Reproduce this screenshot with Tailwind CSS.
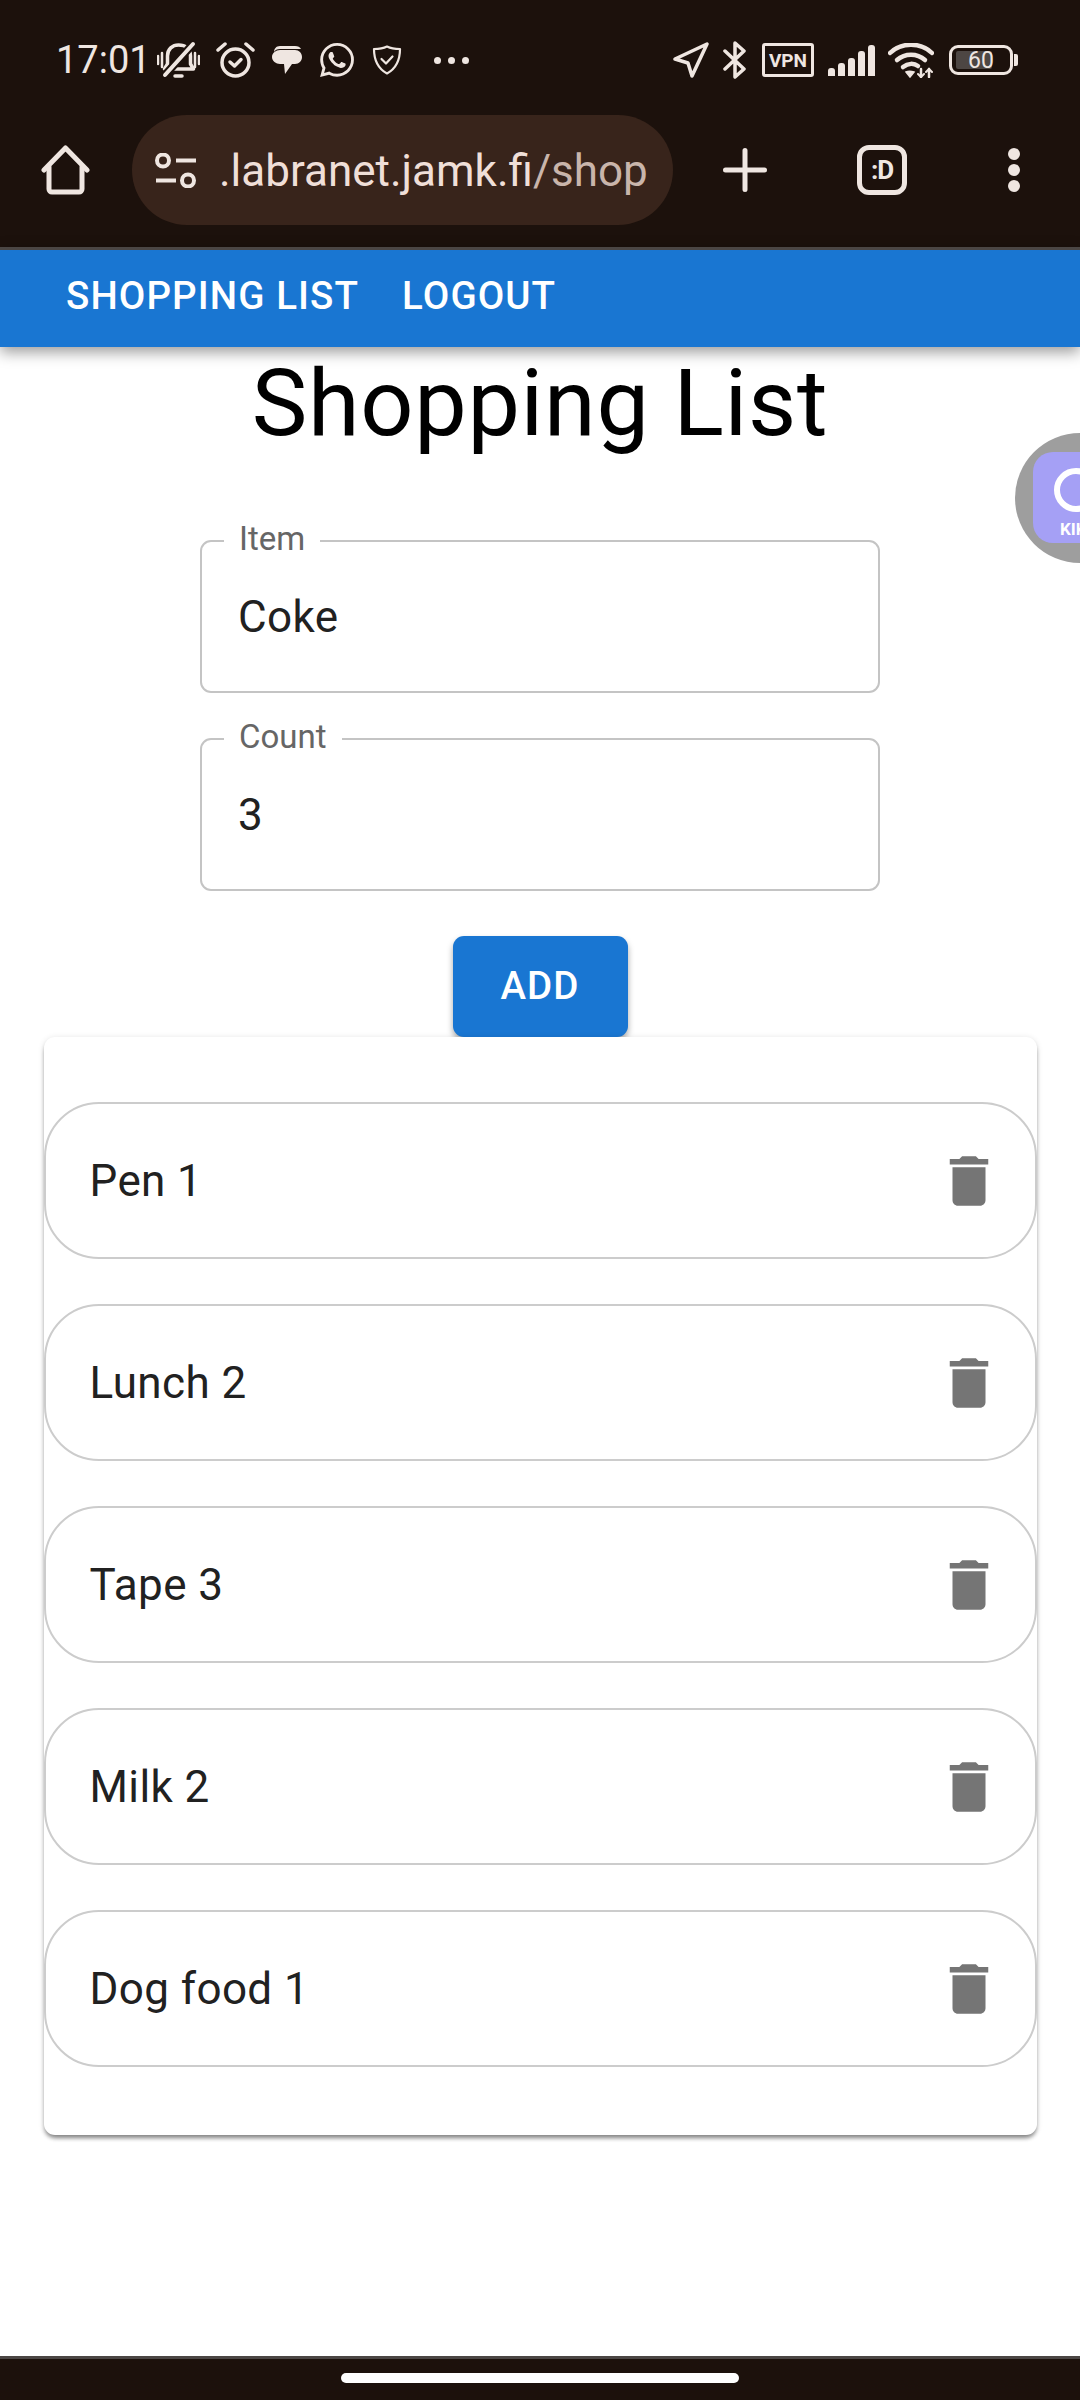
<!DOCTYPE html>
<html lang="en">

<head>
  <meta charset="UTF-8">
  <title>Shopping List</title>
  <script src="https://cdn.jsdelivr.net/npm/@tailwindcss/browser@4"></script>
</head>

<body class="bg-white">
  <div class="relative flex flex-col w-[1080px] h-[2400px] overflow-hidden bg-white font-['Roboto',sans-serif]">

    <!-- Browser chrome -->
    <div class="h-[247px] shrink-0 bg-[#1c110c] text-[#efe6e1]">
      <!-- Status bar -->
      <div class="flex items-center h-[40px] mt-[40px] pl-[56px]">
        <span class="w-[88px] text-[38px] leading-none">17:01</span>
        <svg class="ml-[13px] w-[43px] h-[38px]" viewBox="0 0 43 38" fill="none" stroke="currentColor" stroke-width="3.500" stroke-linecap="round" stroke-linejoin="round">
          <path d="M21.500 4c-6 0-11 4-11 11v8l-3 5h29l-3-5v-8c0-7-5-11-12-11z" />
          <path d="M18 35h7" />
          <path d="M8 34 36 3" stroke="#1c110c" stroke-width="8" />
          <path d="M8 34 36 3" stroke-width="4" />
          <path d="M1 15v8M5 12v14M38 12v14M42 15v8" stroke-width="2.500" />
        </svg>
        <svg class="ml-[16px] w-[39px] h-[36px]" viewBox="0 0 39 36" fill="none" stroke="currentColor" stroke-width="3.500" stroke-linecap="round" stroke-linejoin="round">
          <circle cx="19.500" cy="20.500" r="13.500" />
          <path d="M14 20l4.500 4 6.500-6.500" />
          <path d="M2 8l7-6M37 8l-7-6" />
        </svg>
        <svg class="ml-[17px] w-[30px] h-[28px]" viewBox="0 0 30 28" fill="currentColor">
          <path d="M8 0h15c3 0 5 1 6 3H8C5 3 3 4 2 6 2 3 4 0 8 0z" />
          <path d="M8 4h15c4 0 7 3 7 7s-3 7-7 7h-3l-7 10-1-10H8c-4 0-8-3-8-7s4-7 8-7z" />
        </svg>
        <svg class="ml-[18px] w-[34px] h-[34px]" viewBox="0 0 24 24" fill="currentColor">
          <path d="M17.472 14.382c-.297-.149-1.758-.867-2.03-.967-.273-.099-.471-.148-.67.15-.197.297-.767.966-.94 1.164-.173.199-.347.223-.644.075-.297-.15-1.255-.463-2.39-1.475-.883-.788-1.48-1.761-1.653-2.059-.173-.297-.018-.458.13-.606.134-.133.298-.347.446-.52.149-.174.198-.298.298-.497.099-.198.05-.371-.025-.52-.075-.149-.669-1.612-.916-2.207-.242-.579-.487-.5-.669-.51-.173-.008-.371-.01-.57-.01-.198 0-.52.074-.792.372-.272.297-1.04 1.016-1.04 2.479 0 1.462 1.065 2.875 1.213 3.074.149.198 2.096 3.2 5.077 4.487.709.306 1.262.489 1.694.625.712.227 1.36.195 1.871.118.571-.085 1.758-.719 2.006-1.413.248-.694.248-1.289.173-1.413-.074-.124-.272-.198-.57-.347m-5.421 7.403h-.004a9.87 9.87 0 01-5.031-1.378l-.361-.214-3.741.982.998-3.648-.235-.374a9.86 9.86 0 01-1.51-5.26c.001-5.45 4.436-9.884 9.888-9.884 2.64 0 5.122 1.03 6.988 2.898a9.825 9.825 0 012.893 6.994c-.003 5.45-4.437 9.884-9.885 9.884m8.413-18.297A11.815 11.815 0 0012.05 0C5.495 0 .16 5.335.157 11.892c0 2.096.547 4.142 1.588 5.945L.057 24l6.305-1.654a11.882 11.882 0 005.683 1.448h.005c6.554 0 11.89-5.335 11.893-11.893a11.821 11.821 0 00-3.48-8.413z" />
        </svg>
        <svg class="ml-[18px] w-[30px] h-[30px]" viewBox="0 0 30 30" fill="none" stroke="currentColor" stroke-width="2.200" stroke-linecap="round" stroke-linejoin="round">
          <path d="M15 1.500c4 2 8 2.500 13 2.500 0 10-3 19-13 24.500C5 23 2 14 2 4c5 0 9-.5 13-2.500z" />
          <path d="M9.500 14l4.500 4.500 6.500-7" />
        </svg>
        <div class="flex gap-[7px] ml-[32px]">
          <span class="w-[7px] h-[7px] rounded-full bg-[#efe6e1]"></span>
          <span class="w-[7px] h-[7px] rounded-full bg-[#efe6e1]"></span>
          <span class="w-[7px] h-[7px] rounded-full bg-[#efe6e1]"></span>
        </div>

        <svg class="ml-[204px] w-[36px] h-[36px]" viewBox="0 0 36 36" fill="none" stroke="currentColor" stroke-width="3.500" stroke-linejoin="round">
          <path d="M2 17 34 2 19 34 15 21z" />
        </svg>
        <svg class="ml-[14px] w-[23px] h-[38px]" viewBox="0 0 23 38" fill="none" stroke="currentColor" stroke-width="3.500" stroke-linecap="round" stroke-linejoin="round">
          <path d="M2 10l19 18-9 8V2l9 8L2 28" />
        </svg>
        <div class="flex items-center justify-center ml-[16px] w-[52px] h-[34px] border-[3px] border-[#efe6e1] rounded-[3px] text-[19px] font-bold leading-none">VPN</div>
        <div class="flex items-end gap-[3px] ml-[14px] h-[31px]">
          <span class="w-[7px] h-[8px] rounded-t-[3px] bg-[#efe6e1]"></span>
          <span class="w-[7px] h-[13px] rounded-t-[3px] bg-[#efe6e1]"></span>
          <span class="w-[7px] h-[18px] rounded-t-[3px] bg-[#efe6e1]"></span>
          <span class="w-[7px] h-[25px] rounded-t-[3px] bg-[#efe6e1]"></span>
          <span class="w-[7px] h-[31px] rounded-t-[3px] bg-[#efe6e1]"></span>
        </div>
        <svg class="ml-[13px] w-[46px] h-[35px]" viewBox="0 0 46 35" fill="none" stroke="currentColor" stroke-width="4.500" stroke-linecap="round">
          <path d="M2 10C13-1 33-1 44 10" />
          <path d="M9 17c8-7 20-7 28 0" />
          <path d="M15 24c5-4 11-4 15-1" />
          <path d="M22 34l-4-5c2-1 5-1 8 0z" fill="currentColor" stroke-width="1.500" />
          <path d="M33 26v8M41 34v-8" stroke-width="2.500" />
          <path d="M30 31l3 3 3-3M38 29l3-3 3 3" stroke-width="2" />
        </svg>
        <div class="relative flex items-center justify-center ml-[15px] w-[64px] h-[30px] border-[3px] border-[#efe6e1] rounded-[9px]">
          <span class="absolute left-[4px] top-[3px] bottom-[3px] w-[36px] rounded-[2px] bg-[#4d4643]"></span>
          <span class="relative text-[23px] leading-none">60</span>
        </div>
        <span class="ml-[1px] w-[4px] h-[12px] rounded-r-[2px] bg-[#efe6e1]"></span>
      </div>

      <!-- Address bar -->
      <div class="flex items-center h-[110px] mt-[35px]">
        <svg class="ml-[41px] w-[49px] h-[50px]" viewBox="0 0 49 50" fill="none" stroke="currentColor" stroke-width="5" stroke-linecap="round" stroke-linejoin="round">
          <path d="M3 25 24.500 3 46 25" />
          <path d="M8 22v22a3 3 0 0 0 3 3h27a3 3 0 0 0 3-3V22" />
        </svg>
        <div class="flex items-center ml-[42px] w-[541px] h-[110px] rounded-full bg-[#38241b]">
          <svg class="ml-[23px] w-[42px] h-[35px]" viewBox="0 0 42 35" fill="none" stroke="currentColor" stroke-width="4">
            <circle cx="8" cy="7.500" r="6" />
            <path d="M21 7.500h20M1 27.500h20" />
            <circle cx="33" cy="27.500" r="6" />
          </svg>
          <div class="ml-[22px] mt-[2px] text-[44px] leading-none whitespace-nowrap text-[#f0dfd8]">.labranet.jamk.fi<span class="text-[#c9b5ab]">/shop</span></div>
        </div>
        <svg class="ml-[50px] w-[44px] h-[44px]" viewBox="0 0 44 44" fill="none" stroke="currentColor" stroke-width="5" stroke-linecap="round">
          <path d="M2.500 22h39M22 2.500v39" />
        </svg>
        <div class="flex items-center justify-center ml-[90px] w-[50px] h-[50px] border-[5px] border-[#efe6e1] rounded-[12px] text-[26px] font-bold tracking-[-1px] leading-none">:D</div>
        <div class="flex flex-col gap-[4px] ml-[101px]">
          <span class="w-[12px] h-[12px] rounded-full bg-[#efe6e1]"></span>
          <span class="w-[12px] h-[12px] rounded-full bg-[#efe6e1]"></span>
          <span class="w-[12px] h-[12px] rounded-full bg-[#efe6e1]"></span>
        </div>
      </div>
    </div>

    <!-- App bar -->
    <div class="relative z-10 flex items-center h-[100px] shrink-0 pl-[66px] pb-[4px] border-t-[3px] border-[#4b4644] bg-[#1976d2] text-white text-[38.500px] font-medium tracking-[1.100px] leading-none shadow-[0_5px_14px_rgba(0,0,0,0.4)]">
      <span>SHOPPING LIST</span>
      <span class="ml-[43px]">LOGOUT</span>
    </div>

    <!-- Page content -->
    <div class="flex flex-col items-center">
      <h1 class="-mt-[1px] text-[93.500px] leading-[115px] tracking-[0.7px] text-black">Shopping List</h1>

      <!-- Item field -->
      <div class="relative flex items-center mt-[79px] w-[680px] h-[153px] pl-[36px] border-2 border-[#c4c4c4] rounded-[11px] text-[44px] tracking-[0.4px] text-[#212121]">
        <span class="absolute -top-[22px] left-[22px] px-[15px] bg-white text-[33px] leading-[38px] tracking-normal text-[#666666]">Item</span>
        Coke
      </div>
      <!-- Count field -->
      <div class="relative flex items-center mt-[45px] w-[680px] h-[153px] pl-[36px] border-2 border-[#c4c4c4] rounded-[11px] text-[44px] tracking-[0.4px] text-[#212121]">
        <span class="absolute -top-[22px] left-[22px] px-[15px] bg-white text-[33px] leading-[38px] tracking-normal text-[#666666]">Count</span>
        3
      </div>

      <button class="flex items-center justify-center mt-[45px] w-[175px] h-[101px] rounded-[11px] bg-[#1976d2] text-white text-[38.500px] font-medium tracking-[1.100px] leading-none shadow-[0_4px_6px_rgba(0,0,0,0.35)]">ADD</button>

      <!-- Items card -->
      <div class="flex flex-col gap-[45px] w-[993px] pt-[65px] pb-[68px] rounded-[11px] bg-white shadow-[0_4px_4px_-1px_rgba(0,0,0,0.45),0_1px_6px_rgba(0,0,0,0.12)]">
        <div class="flex items-center justify-between h-[157px] pl-[44px] pr-[33px] border-2 border-[#cccccc] rounded-[55px] text-[44px] tracking-[0.4px] text-[#212121]">
          <span>Pen 1</span>
          <svg class="w-[66px] h-[66px]" viewBox="0 0 24 24" fill="#757575"><path d="M6 19c0 1.100.9 2 2 2h8c1.100 0 2-.9 2-2V7H6v12zM19 4h-3.500l-1-1h-5l-1 1H5v2h14V4z" /></svg>
        </div>
        <div class="flex items-center justify-between h-[157px] pl-[44px] pr-[33px] border-2 border-[#cccccc] rounded-[55px] text-[44px] tracking-[0.4px] text-[#212121]">
          <span>Lunch 2</span>
          <svg class="w-[66px] h-[66px]" viewBox="0 0 24 24" fill="#757575"><path d="M6 19c0 1.100.9 2 2 2h8c1.100 0 2-.9 2-2V7H6v12zM19 4h-3.500l-1-1h-5l-1 1H5v2h14V4z" /></svg>
        </div>
        <div class="flex items-center justify-between h-[157px] pl-[44px] pr-[33px] border-2 border-[#cccccc] rounded-[55px] text-[44px] tracking-[0.4px] text-[#212121]">
          <span>Tape 3</span>
          <svg class="w-[66px] h-[66px]" viewBox="0 0 24 24" fill="#757575"><path d="M6 19c0 1.100.9 2 2 2h8c1.100 0 2-.9 2-2V7H6v12zM19 4h-3.500l-1-1h-5l-1 1H5v2h14V4z" /></svg>
        </div>
        <div class="flex items-center justify-between h-[157px] pl-[44px] pr-[33px] border-2 border-[#cccccc] rounded-[55px] text-[44px] tracking-[0.4px] text-[#212121]">
          <span>Milk 2</span>
          <svg class="w-[66px] h-[66px]" viewBox="0 0 24 24" fill="#757575"><path d="M6 19c0 1.100.9 2 2 2h8c1.100 0 2-.9 2-2V7H6v12zM19 4h-3.500l-1-1h-5l-1 1H5v2h14V4z" /></svg>
        </div>
        <div class="flex items-center justify-between h-[157px] pl-[44px] pr-[33px] border-2 border-[#cccccc] rounded-[55px] text-[44px] tracking-[0.4px] text-[#212121]">
          <span>Dog food 1</span>
          <svg class="w-[66px] h-[66px]" viewBox="0 0 24 24" fill="#757575"><path d="M6 19c0 1.100.9 2 2 2h8c1.100 0 2-.9 2-2V7H6v12zM19 4h-3.500l-1-1h-5l-1 1H5v2h14V4z" /></svg>
        </div>
      </div>
    </div>

    <!-- Gesture bar -->
    <div class="flex justify-center items-start mt-auto h-[44px] pt-[14px] border-t-[3px] border-[#4b4644] bg-[#1c110c]">
      <span class="w-[398px] h-[10px] rounded-full bg-white"></span>
    </div>

    <!-- Floating widget, clipped by the right screen edge -->
    <div class="absolute left-[1015px] top-[433px] w-[130px] h-[130px] rounded-full bg-[#9e9e9e]">
      <div class="relative ml-[18px] mt-[19px] w-[100px] h-[91px] rounded-[20px] bg-[#a5a0f5] text-white">
        <span class="absolute left-[21px] top-[16px] w-[44px] h-[44px] rounded-full border-[6px] border-white"></span>
        <span class="absolute left-[27px] top-[69px] text-[17px] font-bold leading-none">KIK</span>
      </div>
    </div>
  </div>
</body>

</html>
